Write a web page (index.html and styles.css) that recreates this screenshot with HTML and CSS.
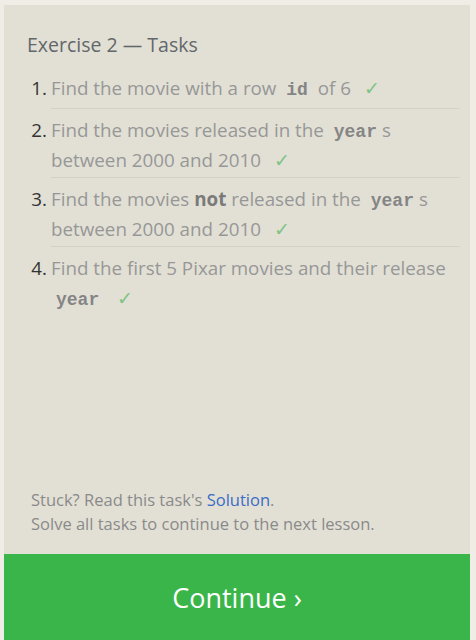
FILE: index.html
```html
<!DOCTYPE html>
<html>
<head>
<meta charset="utf-8">
<link rel="stylesheet" href="styles.css">
</head>
<body>
<div class="panel">
  <div class="content">
    <h2 class="title">Exercise 2 — Tasks</h2>
    <ol class="tasks">
      <li class="task first"><span class="num">1.</span><div class="body">Find the movie with a row <code>id</code> of 6 <span class="check">✓</span></div></li>
      <li class="task"><span class="num">2.</span><div class="body">Find the movies released in the <code>year</code>s between 2000 and 2010 <span class="check">✓</span></div></li>
      <li class="task"><span class="num">3.</span><div class="body">Find the movies <strong>not</strong> released in the <code>year</code>s between 2000 and 2010 <span class="check">✓</span></div></li>
      <li class="task last"><span class="num">4.</span><div class="body">Find the first 5 Pixar movies and their release <code>year</code> <span class="check">✓</span></div></li>
    </ol>
    <div class="footer">
      <p>Stuck? Read this task's <a class="link" href="#">Solution</a>.</p>
      <p>Solve all tasks to continue to the next lesson.</p>
    </div>
  </div>
  <div class="continue">Continue ›</div>
</div>
</body>
</html>
```
FILE: styles.css
```css
html, body {
  margin: 0;
  padding: 0;
}
body {
  background: #efede6;
  font-family: "Open Sans", "Noto Sans", sans-serif;
  width: 476px;
  height: 640px;
  overflow: hidden;
}
.panel {
  margin: 5px 6px 0 4px;
  height: 635px;
  background: #e2e0d5;
  display: flex;
  flex-direction: column;
}
.content {
  flex: 1;
  display: flex;
  flex-direction: column;
  padding: 0 10px 0 23px;
}
.title {
  margin: 28px 0 0 0;
  font-size: 19.5px;
  font-weight: 400;
  color: #62676b;
  line-height: 24px;
}
.tasks {
  list-style: none;
  margin: 10px 0 0 0;
  padding: 0;
}
.task {
  display: flex;
  font-size: 18.8px;
  line-height: 30px;
}
.num {
  width: 24px;
  flex: none;
  text-align: right;
  padding-right: 4px;
  box-sizing: border-box;
  color: #333;
  padding-top: 6px;
}
.body {
  flex: 1;
  color: #979797;
  padding: 6px 0 2px 0;
  border-bottom: 1px solid #d4d2c7;
}
.task.first .body {
  padding-bottom: 5px;
}
.task.last .body {
  border-bottom: none;
}
.body strong {
  color: #7a7a7a;
  font-weight: 700;
}
code {
  font-family: "Liberation Mono", monospace;
  font-weight: 700;
  font-size: 18px;
  line-height: 1;
  color: #858585;
  padding: 0 5px;
}
.check {
  color: #7fc483;
  margin-left: 8px;
}
.footer {
  margin-top: auto;
  padding: 0 0 18px 4px;
  font-size: 16.5px;
  line-height: 24px;
  color: #8a8a8a;
}
.footer p {
  margin: 0;
}
.link {
  color: #3a6cc6;
  text-decoration: none;
}
.continue {
  height: 86px;
  background: #3ab54a;
  color: #fff;
  font-size: 27px;
  display: flex;
  align-items: center;
  justify-content: center;
}
```
